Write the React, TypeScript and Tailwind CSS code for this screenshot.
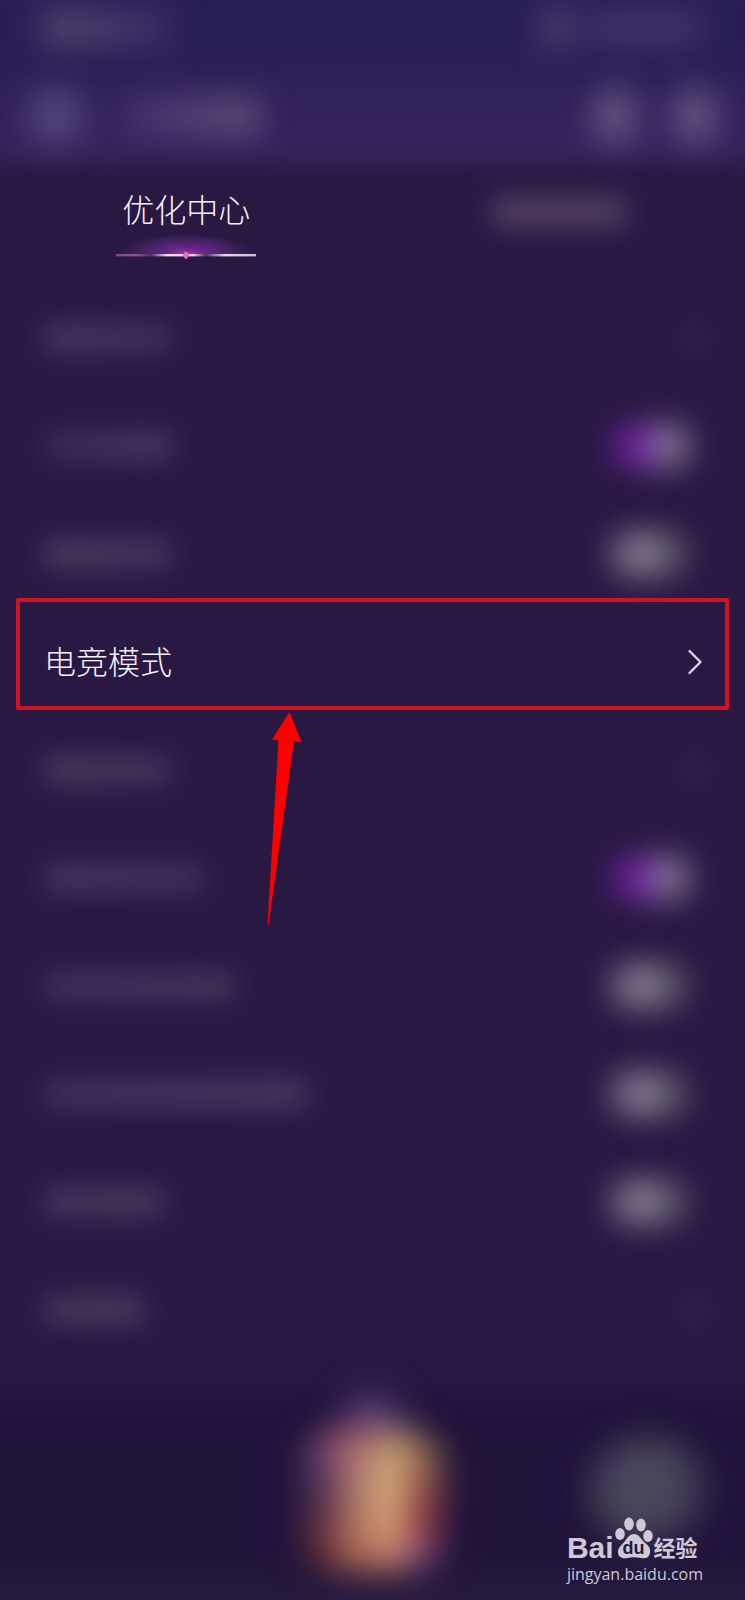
import clsx from 'clsx';

interface Row {
  id: string;
  kind: 'link' | 'toggle';
  title?: string;
  checked?: boolean;
  bar?: string;
}

const ROWS: Row[] = [
  { id: 'row-1', kind: 'link', bar: 'w-32 from-[#4a3a62] to-[#41315b]' },
  { id: 'row-2', kind: 'toggle', checked: true, bar: 'w-32 from-[#3c2c56] to-[#4c3c62]' },
  { id: 'row-3', kind: 'toggle', bar: 'w-32 from-[#503f62] to-[#46385e]' },
  { id: 'row-4', kind: 'link', title: '电竞模式' },
  { id: 'row-5', kind: 'link', bar: 'w-32 from-[#4e3d60] to-[#46365c]' },
  { id: 'row-6', kind: 'toggle', checked: true, bar: 'w-40 from-[#48385e] to-[#433259]' },
  { id: 'row-7', kind: 'toggle', bar: 'w-48 from-[#43325a] to-[#48385c]' },
  { id: 'row-8', kind: 'toggle', bar: 'w-66 from-[#43325a] to-[#4c3b60]' },
  { id: 'row-9', kind: 'toggle', bar: 'w-30 from-[#483a60] to-[#4c3b5e]' },
  { id: 'row-10', kind: 'link', bar: 'w-25 from-[#4a3a5a] to-[#4e3d60]' },
];

const Chevron = ({ className }: { className?: string }) => (
  <svg className={clsx('h-7 w-4', className)} viewBox="0 0 16 28" fill="none" aria-hidden="true">
    <path
      d="M2.5 3 L13.5 14 L2.5 25"
      stroke="#dccfe8"
      strokeWidth="2.4"
      strokeLinecap="round"
      strokeLinejoin="round"
    />
  </svg>
);

const Header = () => (
  <header className="relative h-41">
    <div className="absolute -inset-x-4 -top-8 bottom-0 bg-linear-to-b from-[#2a1e57] from-40% to-[#39255f] blur-[12px]" />

    {/* Status bar */}
    <div className="relative flex h-14 items-center justify-between px-11 blur-[16px]">
      <span className="h-8 w-32 bg-linear-to-r from-[#5c4f74] to-[#3c2d64]" />
      <span className="flex items-center gap-4">
        <span className="h-9 w-8 bg-[#51426f]" />
        <span className="h-8 w-28 bg-[#43346a]" />
      </span>
    </div>

    {/* Title bar */}
    <div className="relative flex h-28 items-center justify-between px-7 pt-2 blur-[16px]">
      <div className="flex items-center gap-10">
        <span className="h-14 w-14 rounded-full bg-[#53467a]" />
        <span className="h-9 w-34 bg-linear-to-r from-[#43326a] to-[#62537c]" />
      </div>
      <div className="flex items-center gap-9">
        <span className="h-14 w-11 rounded-full bg-[#625480]" />
        <span className="h-14 w-11 rounded-full bg-[#625480]" />
      </div>
    </div>
  </header>
);

const TabGlow = () => (
  <svg className="h-8 w-35" viewBox="0 0 140 32" aria-hidden="true">
    <defs>
      <radialGradient
        id="glow"
        cx="70"
        cy="22"
        r="66"
        gradientUnits="userSpaceOnUse"
        gradientTransform="translate(0 15) scale(1 .31)"
      >
        <stop offset="0" stopColor="#a0359a" />
        <stop offset=".3" stopColor="#64248a" />
        <stop offset=".7" stopColor="#43215f" />
        <stop offset="1" stopColor="#352050" stopOpacity=".2" />
      </radialGradient>
      <linearGradient id="line">
        <stop offset="0" stopColor="#7d4a86" />
        <stop offset=".15" stopColor="#8a5590" />
        <stop offset=".25" stopColor="#4a2a58" />
        <stop offset=".36" stopColor="#f0d8f0" />
        <stop offset=".55" stopColor="#f4d6ee" />
        <stop offset=".64" stopColor="#54305c" />
        <stop offset=".78" stopColor="#e6dcec" />
        <stop offset="1" stopColor="#c9bcd2" />
      </linearGradient>
    </defs>
    <path d="M4 22 A66 19 0 0 1 136 22 Z" fill="url(#glow)" />
    <rect x="0" y="22" width="140" height="2.4" fill="url(#line)" />
    <path d="M70 19 L73.5 23.2 L70 27.4 L66.5 23.2 Z" fill="#e870c4" />
  </svg>
);

const Tabs = () => (
  <nav className="relative grid h-30 grid-cols-2">
    <button type="button" className="flex flex-col items-center pt-6">
      <span className="mb-1 text-[32px] leading-10 font-light text-[#f8f2fb]">优化中心</span>
      <TabGlow />
    </button>
    <button type="button" className="flex flex-col items-center pt-8">
      <span className="h-8 w-34 bg-[#514061] blur-[14px]" />
    </button>
  </nav>
);

const SettingRow = ({ row }: { row: Row }) => {
  if (row.kind === 'toggle') {
    return (
      <label htmlFor={row.id} className="flex h-27 items-center justify-between pr-14 pl-11">
        <span className={clsx('h-7 bg-linear-to-r blur-[14px]', row.bar)} />
        <input
          id={row.id}
          type="checkbox"
          defaultChecked={row.checked}
          className="h-10 w-19 appearance-none rounded-full bg-linear-to-r from-[#968e9e] from-40% to-[#4c4658] blur-[17px] checked:from-[#7822b0] checked:from-45% checked:to-[#9c90a4] checked:to-65%"
        />
      </label>
    );
  }

  return (
    <a href={`#${row.id}`} className="relative flex h-27 items-center justify-between pr-10.5 pl-11">
      {row.title ? (
        <span className="pb-1 text-[32px] leading-10 font-light text-[#f8f2fb]">{row.title}</span>
      ) : (
        <span className={clsx('h-7 bg-linear-to-r blur-[14px]', row.bar)} />
      )}
      <Chevron className={row.title ? undefined : 'opacity-50 blur-[12px]'} />

      {/* Highlight frame and pointer */}
      {row.title && (
        <>
          <span className="absolute -top-2.5 right-4 bottom-1.5 left-4 rounded-xs border-4 border-[#d3121f]" />
          <svg
            className="absolute top-full left-66 z-10 -mt-1 h-54 w-10"
            viewBox="0 0 40 216"
            aria-hidden="true"
          >
            <path d="M25.5 0 L37.5 30 L30 29.5 L4.5 213 L3.5 213 L14.5 28 L8 27.5 Z" fill="#ff0000" />
          </svg>
        </>
      )}
    </a>
  );
};

const Watermark = () => (
  <div className="absolute right-10.5 bottom-3 text-[#cfc8d6]">
    <div className="flex h-11 items-end">
      <div className="flex items-end">
        <span className="font-['Liberation_Sans',sans-serif] text-[30px] leading-6 font-bold">Bai</span>
        <div className="relative h-11 w-10">
          <svg className="h-11 w-10" viewBox="0 0 40 44" fill="currentColor" aria-hidden="true">
            <ellipse cx="6" cy="18" rx="4.8" ry="6" />
            <ellipse cx="15" cy="8" rx="4.8" ry="6.4" />
            <ellipse cx="27" cy="9" rx="4.8" ry="6.4" />
            <ellipse cx="34" cy="20" rx="4.8" ry="6" />
            <path d="M20 18 C25 18 27 23 30 26 C34 29 37 32 36 37 C35 42 31 43 27 42 C22 41 17 41 13 42 C8 43 4 41 4 36 C4 31 8 29 11 25 C14 21 16 18 20 18 Z" />
          </svg>
          <span className="absolute inset-x-0 bottom-0.5 text-center font-['Liberation_Sans',sans-serif] text-lg leading-5 font-bold text-[#241740]">
            du
          </span>
        </div>
      </div>
      <span className="text-[22px] leading-7 font-bold">经验</span>
    </div>
    <p className="font-['Open_Sans',sans-serif] text-base leading-7">jingyan.baidu.com</p>
  </div>
);

const Footer = () => (
  <footer className="relative flex grow flex-col overflow-x-clip">
    <div className="absolute -inset-x-8 top-9 bottom-0 bg-linear-to-b from-[#20133a] from-70% to-[#261a3e] blur-[16px]" />
    <div className="absolute inset-x-0 top-24 bottom-0 bg-linear-to-b from-[#20133a] from-60% to-[#261a3e]" />
    <div className="relative grid h-59 grid-cols-3 items-center justify-items-center">
      <span />
      <div className="flex flex-col items-center">
        <span className="-mb-5 h-14 w-14 rounded-full bg-[#5c3d78] blur-[18px]" />
        <div className="h-35 w-35 blur-[14px]">
          <div className="grid h-full grid-cols-4 overflow-hidden rounded-[36px] blur-[10px]">
            <span className="bg-linear-to-b from-[#96527c] via-[#4a2e5a] via-35% to-[#6e2a20]" />
            <span className="bg-linear-to-b from-[#b86470] via-[#a8766c] via-35% to-[#b06850]" />
            <span className="bg-linear-to-b from-[#c09870] via-[#dcb080] via-45% to-[#cc7a60]" />
            <span className="bg-linear-to-b from-[#988058] via-[#862c38] via-65% to-[#9060a0]" />
          </div>
        </div>
      </div>
      <span className="mt-4 ml-13 h-26 w-28 rounded-full bg-linear-to-br from-[#4a4262] via-[#4c495a] to-[#40365a] blur-[18px]" />
    </div>
    <Watermark />
  </footer>
);

export default function App() {
  return (
    <div className="flex min-h-screen flex-col overflow-hidden bg-[#281842] font-['Noto_Sans_CJK_SC',sans-serif]">
      <Header />
      <Tabs />
      <main className="flex flex-col">
        {ROWS.map((row) => (
          <SettingRow key={row.id} row={row} />
        ))}
      </main>
      <Footer />
    </div>
  );
}
